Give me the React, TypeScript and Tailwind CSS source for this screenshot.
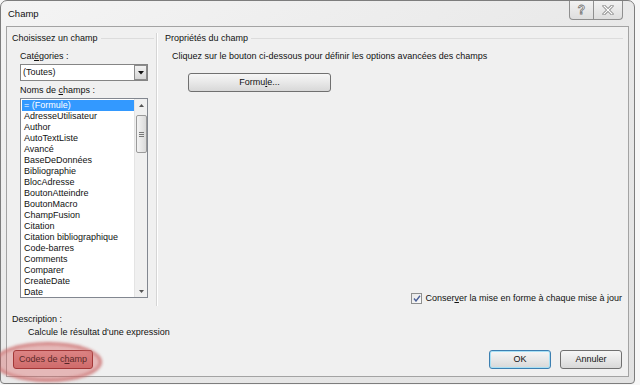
import React from "react";

const items = [
  "= (Formule)",
  "AdresseUtilisateur",
  "Author",
  "AutoTextListe",
  "Avancé",
  "BaseDeDonnées",
  "Bibliographie",
  "BlocAdresse",
  "BoutonAtteindre",
  "BoutonMacro",
  "ChampFusion",
  "Citation",
  "Citation bibliographique",
  "Code-barres",
  "Comments",
  "Comparer",
  "CreateDate",
  "Date",
];

function Btn({ children, className = "" }: { children: React.ReactNode; className?: string }) {
  return (
    <div
      className={
        "h-[19px] flex items-center justify-center rounded-[3px] border border-[#707070] bg-gradient-to-b from-[#f6f6f6] via-[#e8e8e8] to-[#d8d8d8] text-[#111] " +
        className
      }
    >
      {children}
    </div>
  );
}

export default function App() {
  return (
    <div
      className="w-[640px] h-[385px] bg-[#f7f7f7] relative overflow-hidden text-[9px] text-[#111]"
      style={{ fontFamily: '"Liberation Sans", Arial, sans-serif' }}
    >
      {/* window */}
      <div className="w-[635px] h-[384px] rounded-t-[7px] rounded-b-[4px] border border-[#7d7d7d] bg-gradient-to-br from-[#f4f4f4] via-[#e9e9e9] to-[#e2e2e2] flex flex-col relative">
        {/* title bar */}
        <div className="h-[25px] flex items-start relative">
          <div className="pl-[7px] pt-[6px] text-[9.5px] text-[#111]">Champ</div>
          <div className="ml-auto mr-[11px] flex">
            <div className="w-[25px] h-[19px] border border-t-0 border-[#8f8f8f] rounded-bl-[4px] bg-gradient-to-b from-[#f2f2f2] to-[#dedede] flex items-center justify-center">
              <span className="text-[12px] leading-none text-white font-bold" style={{ WebkitTextStroke: "0.8px #777" }}>?</span>
            </div>
            <div className="w-[29px] h-[19px] border border-t-0 border-l-0 border-[#8f8f8f] rounded-br-[4px] bg-gradient-to-b from-[#f2f2f2] to-[#dedede] flex items-center justify-center">
              <svg width="12" height="10" viewBox="0 0 12 10">
                <path d="M2 1 L10 9 M10 1 L2 9" stroke="#8a8a8a" strokeWidth="3" strokeLinecap="square" />
                <path d="M2 1 L10 9 M10 1 L2 9" stroke="#ffffff" strokeWidth="1.2" strokeLinecap="square" />
              </svg>
            </div>
          </div>
        </div>

        {/* content */}
        <div className="mx-[5px] h-[351px] border border-[#a3a3a3] bg-[#f0f0f0] flex flex-col">
          <div className="flex h-[279px]">
            {/* left group */}
            <div className="w-[149px] flex flex-col pl-[5px]">
              <div className="flex items-center mt-[6px] h-[11px]">
                <span>Choisissez un champ</span>
                <div className="flex-1 h-px bg-[#dcdcdc] ml-[3px] mr-[2px]" />
              </div>
              <div className="pl-[8px] mt-[6px] h-[11px]">
                Cat<span className="underline">é</span>gories :
              </div>
              <div className="ml-[8px] mt-[3px] w-[128px] h-[17px] border border-[#858585] bg-white flex items-center">
                <span className="pl-[2px] flex-1">(Toutes)</span>
                <div className="w-[13px] h-[15px] border border-[#8c8c8c] bg-gradient-to-b from-[#f2f2f2] to-[#d6d6d6] flex items-center justify-center">
                  <svg width="6" height="4" viewBox="0 0 6 4">
                    <path d="M0 0 L6 0 L3 3.5 Z" fill="#111" />
                  </svg>
                </div>
              </div>
              <div className="pl-[8px] mt-[3px] h-[11px]">
                Noms de <span className="underline">c</span>hamps :
              </div>
              <div className="ml-[8px] mt-[3px] w-[128px] h-[200px] border border-[#828790] bg-white flex">
                <div className="flex-1 pt-[1px] pl-[1px]">
                  {items.map((t, i) => (
                    <div
                      key={t}
                      className={
                        "h-[11px] leading-[11px] pl-[2px] whitespace-nowrap " +
                        (i === 0 ? "bg-[#3399ff] text-white" : "")
                      }
                    >
                      {t}
                    </div>
                  ))}
                </div>
                <div className="w-[13px] bg-[#f0f0f0] border-l border-[#e4e4e4] flex flex-col items-center">
                  <div className="h-[12px] flex items-center justify-center">
                    <svg width="5" height="3" viewBox="0 0 5 3">
                      <path d="M0 3 L5 3 L2.5 0 Z" fill="#555" />
                    </svg>
                  </div>
                  <div className="w-[11px] h-[38px] mt-[4px] rounded-[2px] border border-[#9a9a9a] bg-gradient-to-r from-[#f4f4f4] to-[#dadada] flex flex-col items-center justify-center gap-[1px]">
                    <div className="w-[5px] h-px bg-[#777]" />
                    <div className="w-[5px] h-px bg-[#777]" />
                    <div className="w-[5px] h-px bg-[#777]" />
                  </div>
                  <div className="mt-auto h-[12px] flex items-center justify-center">
                    <svg width="5" height="3" viewBox="0 0 5 3">
                      <path d="M0 0 L5 0 L2.5 3 Z" fill="#555" />
                    </svg>
                  </div>
                </div>
              </div>
            </div>
            {/* divider */}
            <div className="w-px bg-[#d5d5d5] mt-[6px]" />
            <div className="w-px bg-white mt-[6px]" />
            {/* right group */}
            <div className="flex-1 flex flex-col pl-[7px] pr-[5px]">
              <div className="flex items-center mt-[6px] h-[11px]">
                <span>Propriétés du champ</span>
                <div className="flex-1 h-px bg-[#dcdcdc] ml-[3px]" />
              </div>
              <div className="pl-[7px] mt-[6px] h-[11px]">
                Cliquez sur le bouton ci-dessous pour définir les options avancées des champs
              </div>
              <Btn className="ml-[23px] mt-[12px] w-[143px]">
                <span>
                  Formu<span className="underline">l</span>e...
                </span>
              </Btn>
              <div className="mt-auto mb-[1px] flex items-center justify-end pr-[1px]">
                <div className="w-[11px] h-[11px] border border-[#8e8f8f] bg-gradient-to-br from-[#e8e8e8] to-[#fafafa] flex items-center justify-center mr-[3px]">
                  <svg width="8" height="7" viewBox="0 0 8 7">
                    <path d="M1 3.5 L3 6 L7 0.8" stroke="#4a5f97" strokeWidth="1.4" fill="none" />
                  </svg>
                </div>
                <span>
                  Conser<span className="underline">v</span>er la mise en forme à chaque mise à jour
                </span>
              </div>
            </div>
          </div>

          <div className="pl-[5px] mt-[7px] h-[11px]">Description :</div>
          <div className="pl-[21px] mt-[2px] h-[11px]">Calcule le résultat d'une expression</div>

          <div className="flex mt-[13px] px-[6px]">
            <Btn className="w-[80px] !border-[#8a2a2a] !from-[#e2a0a0] !via-[#d98c8c] !to-[#cf7a7a] text-[#4a0f0f]">
              <span>
                Codes de c<span className="underline">h</span>amp
              </span>
            </Btn>
            <Btn className="ml-auto w-[62px] !border-[#3c7fb1] shadow-[inset_0_0_0_1px_#a8e0f5]">OK</Btn>
            <Btn className="ml-[9px] w-[62px]">Annuler</Btn>
          </div>
        </div>
      </div>

      {/* red highlight annotation */}
      <div className="absolute left-[-6px] top-[342px] w-[108px] h-[40px] rounded-[50%] border-[3px] border-[#c96a6a]/70 bg-[#d05050]/35 blur-[1.5px] pointer-events-none" />
    </div>
  );
}
